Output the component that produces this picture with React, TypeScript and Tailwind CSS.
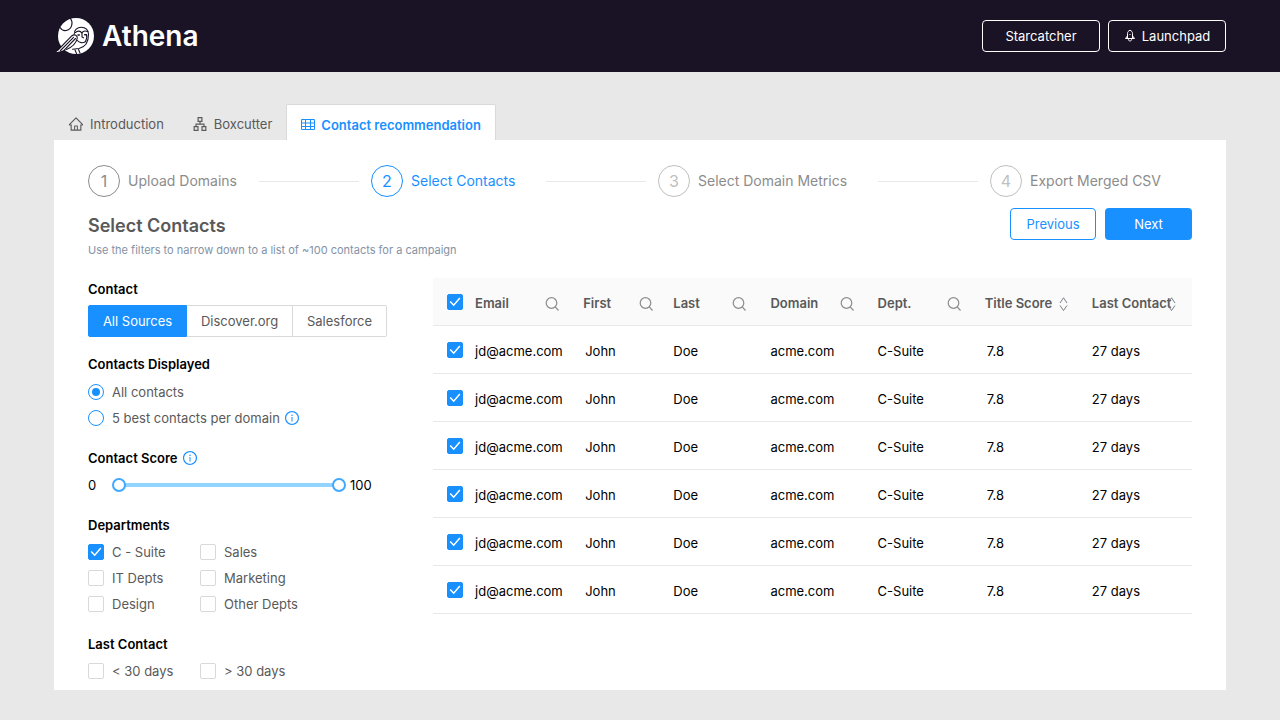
import React, { useState } from 'react'
import { AiOutlineApartment, AiOutlineHome, AiOutlineInfoCircle } from 'react-icons/ai'

interface Contact {
  id: number
  email: string
  first: string
  last: string
  domain: string
  dept: string
  score: string
  lastContact: string
}

const contacts: Contact[] = [1, 2, 3, 4, 5, 6].map((id) => ({
  id,
  email: 'jd@acme.com',
  first: 'John',
  last: 'Doe',
  domain: 'acme.com',
  dept: 'C-Suite',
  score: '7.8',
  lastContact: '27 days',
}))

const columns = [
  { label: 'Email', width: 'w-[108px]', action: 'search', icon: 'right-6' },
  { label: 'First', width: 'w-[90px]', action: 'search', icon: 'right-5' },
  { label: 'Last', width: 'w-[97px]', action: 'search', icon: 'right-6' },
  { label: 'Domain', width: 'w-[107px]', action: 'search', icon: 'right-6' },
  { label: 'Dept.', width: 'w-[107px]', action: 'search', icon: 'right-6' },
  { label: 'Title Score', width: 'w-[107px]', action: 'sort', icon: 'right-6' },
  { label: 'Last Contact', width: 'w-[100px]', action: 'sort', icon: 'right-4' },
]

const steps = [
  { label: 'Upload Domains', circle: 'border-[#8c8c8c] text-[#8c8c8c]', text: 'text-[#8c8c8c]' },
  { label: 'Select Contacts', circle: 'border-[#1890ff] text-[#1890ff]', text: 'text-[#1890ff]' },
  { label: 'Select Domain Metrics', circle: 'border-[#bfbfbf] text-[#bfbfbf]', text: 'text-[#8c8c8c]' },
  { label: 'Export Merged CSV', circle: 'border-[#bfbfbf] text-[#bfbfbf]', text: 'text-[#8c8c8c]' },
]

const departments = ['C - Suite', 'Sales', 'IT Depts', 'Marketing', 'Design', 'Other Depts']

const OwlLogo = () => (
  <svg width="40" height="40" viewBox="0 0 40 40" fill="none" aria-hidden="true">
    <circle cx="20" cy="20" r="18" fill="#fff" />
    <path d="M.5 35.800L16 19.500c2-2 6.500-.5 5.500 3-2 5-6 9-11 11l-9 2.500z" fill="#fff" />
    <g stroke="#1a1326" strokeWidth="1.100" strokeLinecap="round" strokeLinejoin="round">
      <path d="M14.500 2.500c3 4 1.500 11-4.500 12-2.500.4-4.500-.8-5.700-2.800" />
      <path d="M18.300 18c-.3-4 3-6.800 7-6.800 4.300 0 7.200 3 7.200 7 0 7.500-3 12.800-9.500 14.300l-6.500.8" />
      <path d="M19.500 16.500c2-2 4.800-1.700 6.300.3 1.500-2 3.700-2.300 6-1" />
      <path d="M26 17v4l1.500.8M21.300 24.500c2 2.500 5.500 2.800 8 1.200M30.500 18.500c.8 2.500 0 5-1.200 7.200" />
      <path d="M22 19h1.300M28.700 18.800H30" strokeWidth="1.500" />
      <path d="M1.500 34.500L16 19.700c2.500-2 6 0 5.200 3-1.200 4.300-5 8.500-10.700 10.800" />
      <path d="M4.500 34.500L17.500 21.300M7.500 34.800L19.500 22.500" />
      <path d="M19 34l1.500 3.500M22.500 33.500l1.500 3.500" />
    </g>
  </svg>
)

const RocketIcon = () => (
  <svg width="12" height="14" viewBox="0 0 12 14" fill="none" stroke="currentColor" strokeLinejoin="round" aria-hidden="true">
    <path d="M3.500 9.500V4.500C3.500 3 4.300 2 6 1.200c1.700.8 2.500 1.800 2.500 3.300v5" />
    <path d="M3.500 6.800L1.500 9.500h9L8.500 6.800M4.300 9.500c0 1.500.7 2.500 1.700 2.700 1-.2 1.700-1.200 1.700-2.700" />
    <path d="M5.500 5.500h1" />
  </svg>
)

const GridIcon = () => (
  <svg width="14" height="12" viewBox="0 0 14 12" fill="none" stroke="currentColor" aria-hidden="true">
    <path d="M.5.500h13v10H.500zM.500 4h13M.500 7.500h13M4.500.500v10M9.500.500v10" />
  </svg>
)

const SearchIcon = () => (
  <svg width="14" height="14" viewBox="0 0 14 14" fill="none" stroke="#8c8c8c" strokeWidth="1.2" aria-hidden="true">
    <circle cx="6.500" cy="6" r="5.300" />
    <path d="M10.200 9.800l3.300 3.700" />
  </svg>
)

const SortIcon = () => (
  <svg width="9" height="14" viewBox="0 0 9 14" fill="none" stroke="#6b6f76" strokeWidth=".9" aria-hidden="true">
    <path d="M1 6L4.500.8 8 6M1 8.500l3.500 5L8 8.500" />
  </svg>
)

interface CheckboxProps {
  label: string
  checked: boolean
  hideLabel?: boolean
  onChange: () => void
}

const Checkbox: React.FC<CheckboxProps> = ({ label, checked, hideLabel, onChange }) => (
  <label className="flex items-center gap-2 text-[#595959]">
    <span className="grid h-4 w-4 shrink-0">
      <input
        type="checkbox"
        checked={checked}
        onChange={onChange}
        aria-label={label}
        className="peer col-start-1 row-start-1 h-4 w-4 appearance-none rounded-xs border border-[#d9d9d9] bg-white checked:border-[#1890ff] checked:bg-[#1890ff]"
      />
      <svg
        viewBox="0 0 16 16"
        fill="none"
        stroke="#fff"
        strokeWidth="1.500"
        className="pointer-events-none invisible col-start-1 row-start-1 h-4 w-4 peer-checked:visible"
      >
        <path d="M3.200 7.500l3.500 3.700L12.800 4" />
      </svg>
    </span>
    {!hideLabel && <span>{label}</span>}
  </label>
)

interface RadioProps {
  label: string
  checked: boolean
  onChange: () => void
}

const Radio: React.FC<RadioProps> = ({ label, checked, onChange }) => (
  <label className="flex items-center gap-2 text-[#595959]">
    <input
      type="radio"
      name="displayed"
      checked={checked}
      onChange={onChange}
      className="h-4 w-4 appearance-none rounded-full border border-[#1890ff] bg-white bg-clip-content p-[3px] checked:bg-[#1890ff]"
    />
    {label}
  </label>
)

const rangeClass =
  'pointer-events-none absolute inset-0 h-full w-full appearance-none bg-transparent [&::-webkit-slider-thumb]:pointer-events-auto [&::-webkit-slider-thumb]:h-[14px] [&::-webkit-slider-thumb]:w-[14px] [&::-webkit-slider-thumb]:appearance-none [&::-webkit-slider-thumb]:rounded-full [&::-webkit-slider-thumb]:border-2 [&::-webkit-slider-thumb]:border-[#40a9ff] [&::-webkit-slider-thumb]:bg-white'

const Header = () => (
  <header className="flex h-[72px] items-center justify-between bg-[#1a1326] pr-[54px] pl-14 text-white">
    <a href="#" className="flex items-center gap-1.5">
      <OwlLogo />
      <span className="text-[28px] leading-[38px] font-semibold">Athena</span>
    </a>
    <div className="flex gap-2">
      <button className="h-8 w-[118px] rounded-sm border border-white">Starcatcher</button>
      <button className="flex h-8 w-[118px] items-center justify-center gap-1.5 rounded-sm border border-white">
        <RocketIcon />
        Launchpad
      </button>
    </div>
  </header>
)

const Tabs = () => (
  <nav className="flex h-9 items-stretch text-[#595959]">
    <a href="#" className="flex items-center gap-1.5 px-[14px] pt-1">
      <AiOutlineHome size={16} />
      Introduction
    </a>
    <a href="#" className="flex items-center gap-1.5 px-[14px] pt-1">
      <AiOutlineApartment size={16} />
      Boxcutter
    </a>
    <a
      href="#"
      className="flex items-center gap-1.5 rounded-t-xs border border-b-0 border-[#d9d9d9] bg-white px-[14px] pt-1 font-semibold text-[#1890ff]"
    >
      <GridIcon />
      Contact recommendation
    </a>
  </nav>
)

const Steps = () => (
  <ol className="grid grid-cols-[283fr_287fr_332fr_202fr] text-[14px] leading-6">
    {steps.map((step, i) => (
      <li key={step.label} className="flex items-center gap-2">
        <span className={`flex h-8 w-8 shrink-0 items-center justify-center rounded-full border text-base ${step.circle}`}>
          {i + 1}
        </span>
        <span className={`whitespace-nowrap ${step.text}`}>{step.label}</span>
        {i < steps.length - 1 && <span className="mr-3 ml-auto h-px w-[100px] bg-[#e8e8e8]" />}
      </li>
    ))}
  </ol>
)

const Filters = () => {
  const [source, setSource] = useState('All Sources')
  const [displayed, setDisplayed] = useState('all')
  const [range, setRange] = useState([0, 100])
  const [checked, setChecked] = useState<string[]>(['C - Suite'])

  const toggle = (name: string) =>
    setChecked((prev) => (prev.includes(name) ? prev.filter((n) => n !== name) : [...prev, name]))

  return (
    <aside className="flex w-[299px] shrink-0 flex-col gap-4">
      <section>
        <h2 className="mb-[5px] font-semibold">Contact</h2>
        <div className="flex h-8">
          {['All Sources', 'Discover.org', 'Salesforce'].map((name) => (
            <button
              key={name}
              onClick={() => setSource(name)}
              className={`grow border border-l-0 first:rounded-l-xs first:border-l last:rounded-r-xs ${
                source === name ? 'border-[#1890ff] bg-[#1890ff] text-white' : 'border-[#d9d9d9] text-[#595959]'
              }`}
            >
              {name}
            </button>
          ))}
        </div>
      </section>

      <section>
        <h2 className="mb-1 font-semibold">Contacts Displayed</h2>
        <div className="flex h-[26px] items-center">
          <Radio label="All contacts" checked={displayed === 'all'} onChange={() => setDisplayed('all')} />
        </div>
        <div className="flex h-[26px] items-center gap-1">
          <Radio label="5 best contacts per domain" checked={displayed === 'best'} onChange={() => setDisplayed('best')} />
          <AiOutlineInfoCircle size={16} className="text-[#1890ff]" />
        </div>
      </section>

      <section>
        <h2 className="mb-[3px] flex items-center gap-1 font-semibold">
          Contact Score
          <AiOutlineInfoCircle size={16} className="text-[#1890ff]" />
        </h2>
        <div className="flex h-[26px] items-center">
          <span className="w-6">{range[0]}</span>
          <div className="relative h-[14px] w-[234px]">
            <div className="absolute inset-x-1 top-[5px] h-1 bg-[#91d5ff]" />
            <input
              type="range"
              aria-label="Minimum score"
              value={range[0]}
              onChange={(e) => setRange([Math.min(Number(e.target.value), range[1]), range[1]])}
              className={rangeClass}
            />
            <input
              type="range"
              aria-label="Maximum score"
              value={range[1]}
              onChange={(e) => setRange([range[0], Math.max(Number(e.target.value), range[0])])}
              className={rangeClass}
            />
          </div>
          <span className="ml-1">{range[1]}</span>
        </div>
      </section>

      <section>
        <h2 className="mb-[3px] font-semibold">Departments</h2>
        <div className="grid auto-rows-[26px] grid-cols-[112px_1fr] items-center">
          {departments.map((name) => (
            <Checkbox key={name} label={name} checked={checked.includes(name)} onChange={() => toggle(name)} />
          ))}
        </div>
      </section>

      <section>
        <h2 className="mb-[3px] font-semibold">Last Contact</h2>
        <div className="grid auto-rows-[26px] grid-cols-[112px_1fr] items-center">
          {['< 30 days', '> 30 days'].map((name) => (
            <Checkbox key={name} label={name} checked={checked.includes(name)} onChange={() => toggle(name)} />
          ))}
        </div>
      </section>
    </aside>
  )
}

const ContactsTable = () => {
  const [selected, setSelected] = useState<number[]>(contacts.map((c) => c.id))
  const allSelected = selected.length === contacts.length

  const toggle = (id: number) =>
    setSelected((prev) => (prev.includes(id) ? prev.filter((n) => n !== id) : [...prev, id]))

  return (
    <div className="min-w-0 flex-1">
      <table className="w-full table-fixed text-left">
        <thead className="bg-[#fafafa] text-[#595959]">
          <tr className="h-[47px] border-b border-[#e8e8e8]">
            <th className="w-[42px] pt-0.5 pl-[14px]">
              <Checkbox
                label="Select all"
                hideLabel
                checked={allSelected}
                onChange={() => setSelected(allSelected ? [] : contacts.map((c) => c.id))}
              />
            </th>
            {columns.map((col) => (
              <th key={col.label} className={`pt-1 font-semibold whitespace-nowrap ${col.width}`}>
                <div className="relative flex items-center">
                  {col.label}
                  <button aria-label={`${col.action} ${col.label}`} className={`absolute top-[5px] ${col.icon}`}>
                    {col.action === 'sort' ? <SortIcon /> : <SearchIcon />}
                  </button>
                </div>
              </th>
            ))}
          </tr>
        </thead>
        <tbody>
          {contacts.map((c) => (
            <tr key={c.id} className="h-12 border-b border-[#e8e8e8]">
              <td className="pt-0.5 pl-[14px]">
                <Checkbox label={`Select ${c.email}`} hideLabel checked={selected.includes(c.id)} onChange={() => toggle(c.id)} />
              </td>
              <td className="pt-1">{c.email}</td>
              <td className="pt-1 pl-0.5">{c.first}</td>
              <td className="pt-1">{c.last}</td>
              <td className="pt-1">{c.domain}</td>
              <td className="pt-1">{c.dept}</td>
              <td className="pt-1 pl-0.5">{c.score}</td>
              <td className="pt-1">{c.lastContact}</td>
            </tr>
          ))}
        </tbody>
      </table>
    </div>
  )
}

export default function App() {
  return (
    <div className="min-h-screen bg-[#e8e8e8] font-['Inter',sans-serif] text-[13px] leading-[22px] text-black">
      <Header />
      <main className="px-[54px] pt-8 pb-[30px]">
        <Tabs />
        <div className="bg-white px-[34px] pt-[25px] pb-1.5">
          <Steps />
          <div className="mt-[11px] flex items-start justify-between">
            <div>
              <h1 className="text-lg leading-9 font-semibold text-[#595959]">Select Contacts</h1>
              <p className="text-[11px] leading-3 text-[#8492a6]">
                Use the filters to narrow down to a list of ~100 contacts for a campaign
              </p>
            </div>
            <div className="flex gap-[9px]">
              <button className="h-8 w-[86px] rounded-sm border border-[#1890ff] text-[#1890ff]">Previous</button>
              <button className="h-8 w-[87px] rounded-sm bg-[#1890ff] text-white">Next</button>
            </div>
          </div>
          <div className="mt-[22px] flex gap-[46px]">
            <Filters />
            <ContactsTable />
          </div>
        </div>
      </main>
    </div>
  )
}
